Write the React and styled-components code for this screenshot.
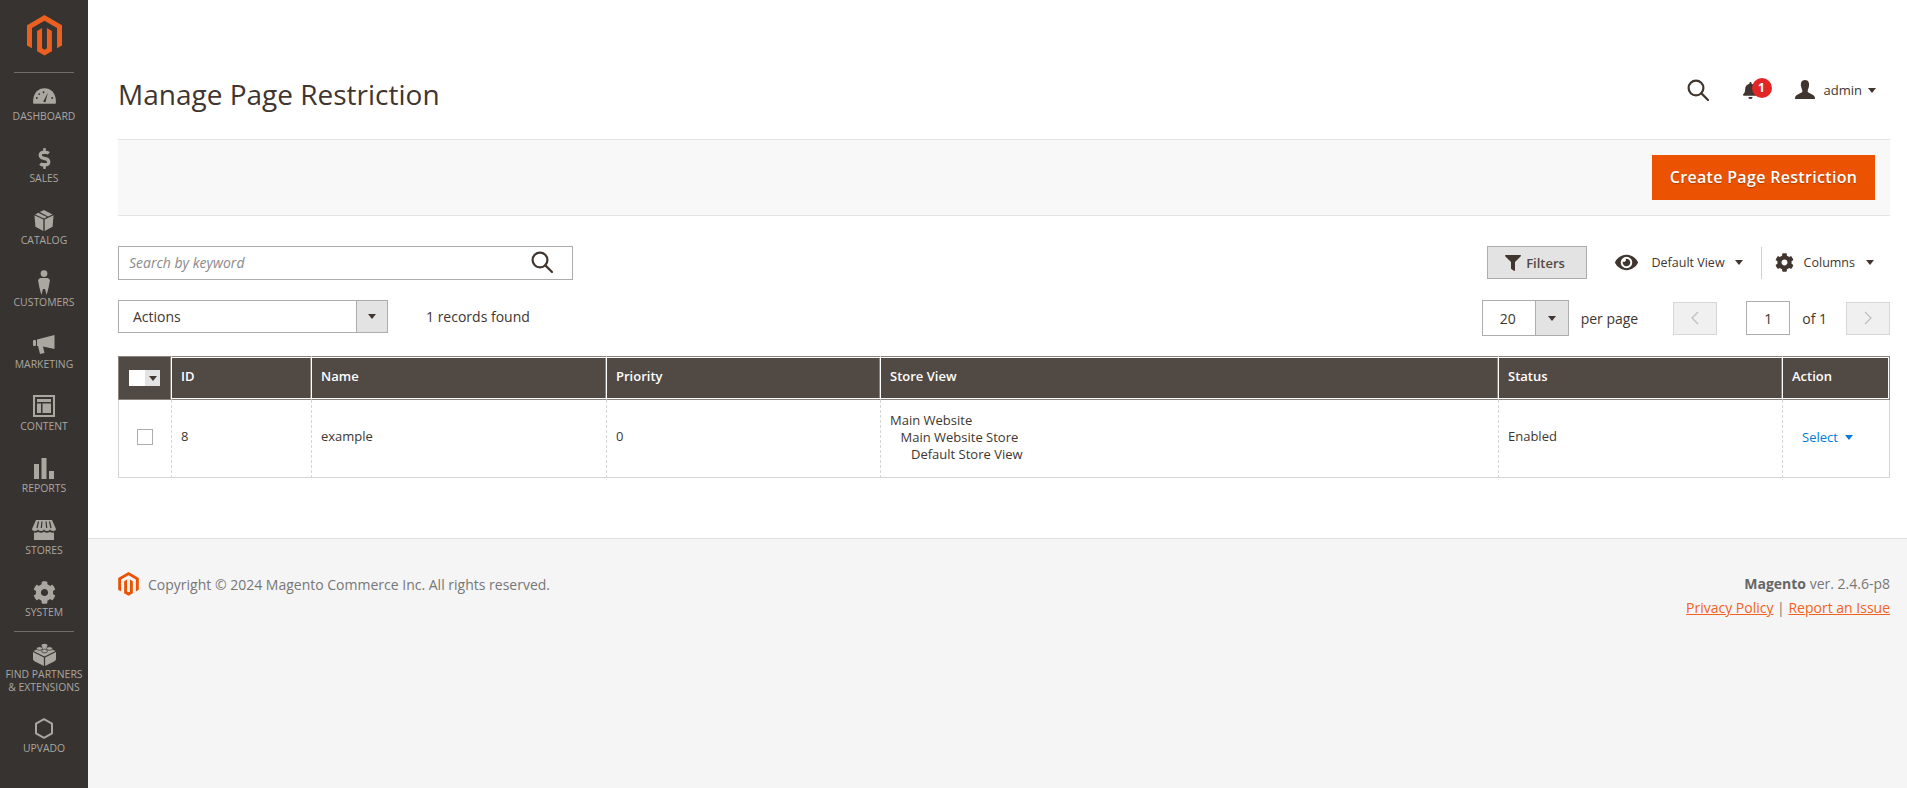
import React from "react";
import styled, { createGlobalStyle } from "styled-components";
import { FaCog, FaEye, FaFilter, FaBell, FaDollarSign } from "react-icons/fa";

const GlobalStyle = createGlobalStyle`
  html, body {
    margin: 0;
    padding: 0;
    background: #fff;
    font-family: "Open Sans", "Liberation Sans", sans-serif;
    color: #41362f;
    font-size: 14px;
  }
  * { box-sizing: border-box; }
`;

const S_Page = styled.div`
  display: flex;
  min-height: 788px;
`;
const S_Sidebar = styled.nav`
  width: 88px;
  flex: none;
  background: #373330;
  display: flex;
  flex-direction: column;
  align-items: center;
`;
const S_LogoBox = styled.div`
  height: 73px;
  padding-top: 15px;
  width: 60px;
  display: flex;
  justify-content: center;
  border-bottom: 1px solid #736d68;
`;
const S_NavItem = styled.div`
  width: 88px;
  height: ${(p) => p.$h || 62}px;
  display: flex;
  flex-direction: column;
  align-items: center;
  color: #aaa6a0;
  font-size: 10.4px;
  line-height: 13px;
  text-transform: uppercase;
  text-align: center;
  white-space: nowrap;
  padding-top: ${(p) => p.$top ?? 11}px;
`;
const S_NavIcon = styled.div`
  height: 24px;
  display: flex;
  align-items: center;
  justify-content: center;
  margin-bottom: 2px;
  color: #aaa6a0;
`;
const S_NavDivider = styled.div`
  width: 60px;
  height: 1px;
  background: #736d68;
`;

const S_Main = styled.main`
  flex: 1;
  min-width: 0;
  display: flex;
  flex-direction: column;
`;
const S_Content = styled.div`
  padding: 0 17px 0 30px;
  height: 538px;
`;
const S_Header = styled.header`
  height: 139px;
  display: flex;
  align-items: flex-start;
  justify-content: space-between;
`;
const S_Title = styled.h1`
  margin: 75px 0 0;
  font-size: 28px;
  line-height: 38px;
  font-weight: 400;
  color: #41362f;
`;
const S_HeaderTools = styled.div`
  margin-top: 78px;
  display: flex;
  align-items: center;
  height: 24px;
  padding-right: 14px;
`;
const S_BellBox = styled.div`
  position: relative;
  margin-left: 33px;
  width: 34px;
  height: 24px;
  display: flex;
  align-items: center;
`;
const S_Badge = styled.span`
  position: absolute;
  left: 10px;
  top: 0;
  width: 20px;
  height: 20px;
  border-radius: 50%;
  background: #e22626;
  color: #fff;
  font-size: 12px;
  font-weight: 700;
  line-height: 20px;
  text-align: center;
`;
const S_AdminUser = styled.div`
  margin-left: 19px;
  display: flex;
  align-items: center;
  font-size: 13px;
  color: #41362f;
`;
const S_Caret = styled.span`
  display: inline-block;
  width: 0;
  height: 0;
  border-left: ${(p) => p.$size || 4}px solid transparent;
  border-right: ${(p) => p.$size || 4}px solid transparent;
  border-top: ${(p) => (p.$size || 4) + 1}px solid ${(p) => p.$color || "#41362f"};
`;
const S_ActionBar = styled.div`
  height: 77px;
  background: #f8f8f8;
  border-top: 1px solid #e3e3e3;
  border-bottom: 1px solid #e3e3e3;
  display: flex;
  justify-content: flex-end;
  align-items: flex-start;
  padding: 15px 15px 0 0;
`;
const S_PrimaryButton = styled.button`
  height: 45px;
  width: 223px;
  border: 0;
  padding: 0 0 2px;
  background: #eb5202;
  color: #fff;
  font-family: inherit;
  font-size: 16px;
  font-weight: 600;
  letter-spacing: 0.02em;
  text-shadow: 0 1px 1px rgba(0, 0, 0, 0.3);
`;
const S_ToolRow = styled.div`
  display: flex;
  align-items: flex-start;
  justify-content: space-between;
  margin-top: ${(p) => p.$mt}px;
  height: ${(p) => p.$h}px;
`;
const S_Group = styled.div`
  display: flex;
  align-items: center;
  padding-right: ${(p) => p.$pr || 0}px;
`;
const S_SearchBox = styled.div`
  width: 455px;
  height: 34px;
  border: 1px solid #adadad;
  display: flex;
  align-items: center;
  justify-content: space-between;
  padding: 0 19px 2px 10px;
  font-style: italic;
  color: #8a8a8a;
  font-size: 14px;
`;
const S_FilterButton = styled.div`
  width: 100px;
  height: 33px;
  background: #e3e3e3;
  border: 1px solid #adadad;
  display: flex;
  align-items: center;
  justify-content: center;
  gap: 5px;
  font-size: 13px;
  font-weight: 600;
  color: #514943;
  padding-right: 3px;
`;
const S_ViewToggle = styled.div`
  display: flex;
  align-items: center;
  font-size: 12.5px;
  color: #41362f;
  margin-left: ${(p) => p.$ml}px;
  height: 33px;
`;
const S_ToggleLabel = styled.span`
  margin: 0 ${(p) => p.$r}px 0 ${(p) => p.$l}px;
`;
const S_VDivider = styled.div`
  width: 1px;
  height: 32px;
  background: #d1d1d1;
  margin: 0 13px 0 18px;
`;
const S_Select = styled.div`
  display: flex;
  width: ${(p) => p.$w}px;
  height: ${(p) => p.$h}px;
  border: 1px solid #adadad;
  font-size: 14px;
  color: #41362f;
`;
const S_SelectValue = styled.div`
  flex: 1;
  display: flex;
  align-items: center;
  padding-left: ${(p) => p.$pl}px;
`;
const S_SelectArrow = styled.div`
  width: ${(p) => p.$w}px;
  background: #e3e3e3;
  border-left: 1px solid #adadad;
  display: flex;
  align-items: center;
  justify-content: center;
`;
const S_Found = styled.div`
  margin-left: 38px;
  font-size: 14px;
  color: #41362f;
`;
const S_PerPage = styled.span`
  margin-left: 12px;
  font-size: 14px;
  color: #41362f;
`;
const S_PageButton = styled.div`
  width: 44px;
  height: 33px;
  background: #f0f0f0;
  border: 1px solid #d6d6d6;
  display: flex;
  align-items: center;
  justify-content: center;
  margin-left: ${(p) => p.$ml || 0}px;
  color: #bdbdbd;
`;
const S_PageInput = styled.div`
  width: 44px;
  height: 34px;
  border: 1px solid #adadad;
  margin-left: 29px;
  display: flex;
  align-items: center;
  justify-content: center;
  font-size: 14px;
`;
const S_Of = styled.span`
  margin: 0 19px 0 12px;
  font-size: 14px;
`;
const S_GridWrap = styled.div`
  margin-top: 20px;
`;
const S_Table = styled.table`
  width: 100%;
  table-layout: fixed;
  border-collapse: separate;
  border-spacing: 0;
`;
const S_Th = styled.th`
  height: 44px;
  background: #514943;
  color: #fff;
  font-size: 13px;
  font-weight: 600;
  text-align: left;
  padding: 0 0 4px 9px;
  border-top: 1px solid #8a837e;
  border-bottom: 1px solid #8a837e;
  border-left: 1px solid #fff;
  box-shadow: inset 0 1px 0 #fff, inset 0 -1px 0 #fff, inset -1px 0 0 #8a837e;
  &:first-child {
    padding: 0;
    border-left: 1px solid #8a837e;
    box-shadow: inset -1px 0 0 #8a837e;
  }
  &:last-child {
    border-right: 1px solid #8a837e;
    box-shadow: inset 0 1px 0 #fff, inset 0 -1px 0 #fff, inset -1px 0 0 #fff;
  }
`;
const S_Td = styled.td`
  height: 78px;
  vertical-align: top;
  padding: ${(p) => (p.$flush ? 0 : "12px 9px 0")};
  font-size: 13px;
  line-height: 17px;
  color: #41362f;
  border-left: 1px dashed #d6d6d6;
  border-bottom: 1px solid #d6d6d6;
  &:first-child {
    border-left: 1px solid #d6d6d6;
  }
  &:last-child {
    border-right: 1px solid #d6d6d6;
  }
`;
const S_TdPlain = styled.div`
  padding-top: 16px;
`;
const S_HeadCheck = styled.div`
  display: flex;
  margin-left: 10px;
  width: 31px;
  height: 16px;
`;
const S_HeadCheckBox = styled.div`
  width: 16px;
  background: #fff;
`;
const S_HeadCheckArrow = styled.div`
  flex: 1;
  background: #e3e3e3;
  display: flex;
  align-items: center;
  justify-content: center;
`;
const S_Checkbox = styled.div`
  width: 16px;
  height: 16px;
  border: 1px solid #adadad;
  margin: 29px 0 0 18px;
`;
const S_Tree = styled.div`
  padding-left: ${(p) => p.$level * 10.5}px;
  white-space: nowrap;
`;
const S_SelectLink = styled.div`
  padding: 29px 0 0 19px;
  color: #007bdb;
  display: flex;
  align-items: center;
  gap: 7px;
`;

const S_Footer = styled.footer`
  flex: 1;
  background: #f5f5f5;
  border-top: 1px solid #e3e3e3;
  padding: 33px 17px 0 30px;
  display: flex;
  justify-content: space-between;
  color: #777;
  font-size: 14px;
`;
const S_Copyright = styled.div`
  display: flex;
  align-items: center;
  gap: 9px;
  height: 24px;
`;
const S_FooterRight = styled.div`
  text-align: right;
  line-height: 24px;
`;
const S_FooterLink = styled.a`
  color: #f26322;
  text-decoration: underline;
`;
const S_Strong = styled.strong`
  color: #666;
  font-weight: 700;
`;

function Logo({ w = 35, h = 41, color = "#eb6020" }) {
  return (
    <svg width={w} height={h} viewBox="0 0 36 42" fill={color}>
      <polygon points="18 0 0 10.4 0 31.2 5.1 34.1 5.1 13.3 18 5.9 30.9 13.3 30.9 34.1 36 31.2 36 10.4" />
      <polygon points="20.5 34.1 18 35.6 15.5 34.1 15.5 13.3 10.4 16.3 10.4 37.1 18 41.5 25.6 37.1 25.6 16.3 20.5 13.3" />
    </svg>
  );
}

function SearchIcon({ size = 22 }) {
  return (
    <svg width={size} height={size} viewBox="0 0 22 22" fill="none" stroke="#41362f" strokeWidth="2.2">
      <circle cx="9" cy="9" r="7.4" />
      <path d="M14.4 14.4 L21 21" strokeLinecap="round" />
    </svg>
  );
}

const navColor = "#aaa6a0";

const navIcons = {
  dashboard: (
    <svg width="23" height="16" viewBox="0 0 24 16" fill={navColor}>
      <path d="M0.3 16 C-1 6 5 0 12 0 C19 0 25 6 23.7 16 Z" />
      <path d="M10.6 14 L15.5 4.5 L13 14.6 Z" fill="#373330" />
      <g fill="#373330">
        <circle cx="4" cy="10" r="1" />
        <circle cx="6.5" cy="6" r="1" />
        <circle cx="11" cy="4" r="1" />
        <circle cx="20" cy="10" r="1" />
      </g>
    </svg>
  ),
  sales: <FaDollarSign size={21} color={navColor} />,
  catalog: (
    <svg width="20" height="21" viewBox="0 0 20 22" fill={navColor}>
      <path d="M0 5.5 L9.3 10 V22 L1 17.5 Z" />
      <path d="M20 5.5 L10.7 10 V22 L19 17.5 Z" />
      <path d="M10 0 L5.5 2.2 L14.2 6.8 L19 4.6 Z" />
      <path d="M4 3 L0.8 4.6 L10 9 L13 7.4 Z" />
    </svg>
  ),
  customers: (
    <svg width="12" height="25" viewBox="0 0 12 25" fill={navColor}>
      <circle cx="6" cy="3.6" r="3.4" />
      <path d="M2 8 H10 L12 10 L10.5 18 L8.6 25 L7 19 H5 L3.4 25 L1.5 18 L0 10 Z" />
    </svg>
  ),
  marketing: (
    <svg width="22" height="19" viewBox="0 0 22 19" fill={navColor}>
      <rect x="0" y="5" width="3" height="6" rx="1" />
      <path d="M4 4.5 L21.5 0 V14 L10 11.5 L11.5 18 L7 19 L5 11 L4 11 Z" />
    </svg>
  ),
  content: (
    <svg width="22" height="22" viewBox="0 0 22 22" fill={navColor}>
      <path d="M0 0 H22 V22 H0 Z M2 2 V20 H20 V2 Z" fillRule="evenodd" />
      <rect x="4" y="4" width="14" height="3" />
      <rect x="4" y="8.5" width="4" height="9.5" />
      <rect x="9.5" y="8.5" width="8.5" height="9.5" />
    </svg>
  ),
  reports: (
    <svg width="20" height="21" viewBox="0 0 20 21" fill={navColor}>
      <rect x="0" y="6" width="5" height="15" />
      <rect x="7.5" y="0" width="5" height="21" />
      <rect x="15" y="13" width="5" height="8" />
    </svg>
  ),
  stores: (
    <svg width="24" height="20" viewBox="0 0 24 20" fill={navColor}>
      <path d="M4 0 H20 L24 9 Q24 11 21.5 11 Q19 11 18 9.5 Q17 11 15 11 Q13 11 12 9.5 Q11 11 9 11 Q7 11 6 9.5 Q5 11 2.5 11 Q0 11 0 9 Z" />
      <path d="M2 12.5 Q4.5 13 6 11.8 Q9 13.5 12 11.8 Q15 13.5 18 11.8 Q19.5 13 22 12.5 V20 H2 Z" />
      <path d="M6.5 1.5 L5 8 M10 1.5 L9.3 8 M14 1.5 L14.7 8 M17.5 1.5 L19 8" stroke="#373330" strokeWidth="1.2" />
    </svg>
  ),
  system: <FaCog size={23} color={navColor} />,
  partners: (
    <svg width="23" height="23" viewBox="0 0 23 23" fill={navColor}>
      <path d="M0 9 L10.9 14.5 V23 L1.5 18.2 Q0 17.5 0 16 Z" />
      <path d="M23 9 L12.1 14.5 V23 L21.5 18.2 Q23 17.5 23 16 Z" />
      <path d="M11.5 3 L22.5 8 L11.5 13.4 L0.5 8 Z" />
      <ellipse cx="11.5" cy="2.5" rx="3" ry="1.8" />
      <ellipse cx="6.5" cy="5.5" rx="3" ry="1.8" stroke="#373330" strokeWidth=".7" />
      <ellipse cx="16.5" cy="5.5" rx="3" ry="1.8" stroke="#373330" strokeWidth=".7" />
      <ellipse cx="11.5" cy="8" rx="3" ry="1.8" stroke="#373330" strokeWidth=".7" />
    </svg>
  ),
  upvado: (
    <svg width="18" height="21" viewBox="0 0 18 21" fill="none" stroke={navColor} strokeWidth="2">
      <path d="M9 1.2 L17 5.6 V15.4 L9 19.8 L1 15.4 V5.6 Z" strokeLinejoin="round" />
    </svg>
  ),
};

const navTop = [
  ["dashboard", "Dashboard"],
  ["sales", "Sales"],
  ["catalog", "Catalog"],
  ["customers", "Customers"],
  ["marketing", "Marketing"],
  ["content", "Content"],
  ["reports", "Reports"],
  ["stores", "Stores"],
  ["system", "System"],
];

function Sidebar() {
  return (
    <S_Sidebar>
      <S_LogoBox>
        <Logo />
      </S_LogoBox>
      {navTop.map(([icon, label]) => (
        <S_NavItem key={label}>
          <S_NavIcon>{navIcons[icon]}</S_NavIcon>
          {label}
        </S_NavItem>
      ))}
      <S_NavDivider />
      <S_NavItem $h={72} $top={10}>
        <S_NavIcon>{navIcons.partners}</S_NavIcon>
        Find Partners
        <br />& Extensions
      </S_NavItem>
      <S_NavItem $top={12}>
        <S_NavIcon>{navIcons.upvado}</S_NavIcon>
        Upvado
      </S_NavItem>
    </S_Sidebar>
  );
}

const columns = [53, 140, 295, 274, 618, 284, 108];

function Grid() {
  return (
    <S_GridWrap>
      <S_Table>
        <colgroup>
          {columns.map((w, i) => (
            <col key={i} width={w} />
          ))}
        </colgroup>
        <thead>
          <tr>
            <S_Th>
              <S_HeadCheck>
                <S_HeadCheckBox />
                <S_HeadCheckArrow>
                  <S_Caret />
                </S_HeadCheckArrow>
              </S_HeadCheck>
            </S_Th>
            <S_Th>ID</S_Th>
            <S_Th>Name</S_Th>
            <S_Th>Priority</S_Th>
            <S_Th>Store View</S_Th>
            <S_Th>Status</S_Th>
            <S_Th>Action</S_Th>
          </tr>
        </thead>
        <tbody>
          <tr>
            <S_Td $flush>
              <S_Checkbox />
            </S_Td>
            <S_Td>
              <S_TdPlain>8</S_TdPlain>
            </S_Td>
            <S_Td>
              <S_TdPlain>example</S_TdPlain>
            </S_Td>
            <S_Td>
              <S_TdPlain>0</S_TdPlain>
            </S_Td>
            <S_Td>
              <S_Tree $level={0}>Main Website</S_Tree>
              <S_Tree $level={1}>Main Website Store</S_Tree>
              <S_Tree $level={2}>Default Store View</S_Tree>
            </S_Td>
            <S_Td>
              <S_TdPlain>Enabled</S_TdPlain>
            </S_Td>
            <S_Td $flush>
              <S_SelectLink>
                Select
                <S_Caret $color="#007bdb" />
              </S_SelectLink>
            </S_Td>
          </tr>
        </tbody>
      </S_Table>
    </S_GridWrap>
  );
}

export default function App() {
  return (
    <>
      <GlobalStyle />
      <S_Page>
        <Sidebar />
        <S_Main>
          <S_Content>
            <S_Header>
              <S_Title>Manage Page Restriction</S_Title>
              <S_HeaderTools>
                <SearchIcon />
                <S_BellBox>
                  <FaBell size={17} color="#41362f" />
                  <S_Badge>1</S_Badge>
                </S_BellBox>
                <S_AdminUser>
                  <svg width="20" height="20" viewBox="0 0 20 20" fill="#41362f">
                    <path d="M10 0 C13.5 0 14.5 3 14 6 C13.6 8.4 12.6 10 12.6 11.4 C12.6 13 20 14 20 18 V19 H0 V18 C0 14 7.4 13 7.4 11.4 C7.4 10 6.4 8.4 6 6 C5.5 3 6.5 0 10 0 Z" />
                  </svg>
                  <S_ToggleLabel $l={9} $r={6}>admin</S_ToggleLabel>
                  <S_Caret />
                </S_AdminUser>
              </S_HeaderTools>
            </S_Header>
            <S_ActionBar>
              <S_PrimaryButton>Create Page Restriction</S_PrimaryButton>
            </S_ActionBar>
            <S_ToolRow $mt={30} $h={34}>
              <S_SearchBox>
                Search by keyword
                <SearchIcon />
              </S_SearchBox>
              <S_Group $pr={16}>
                <S_FilterButton>
                  <FaFilter size={16} color="#41362f" />
                  Filters
                </S_FilterButton>
                <S_ViewToggle $ml={28}>
                  <FaEye size={23} color="#41362f" />
                  <S_ToggleLabel $l={14} $r={10}>Default View</S_ToggleLabel>
                  <S_Caret />
                </S_ViewToggle>
                <S_VDivider />
                <S_ViewToggle $ml={0}>
                  <FaCog size={19} color="#41362f" />
                  <S_ToggleLabel $l={10} $r={11}>Columns</S_ToggleLabel>
                  <S_Caret />
                </S_ViewToggle>
              </S_Group>
            </S_ToolRow>
            <S_ToolRow $mt={20} $h={36}>
              <S_Group>
                <S_Select $w={270} $h={33}>
                  <S_SelectValue $pl={14}>Actions</S_SelectValue>
                  <S_SelectArrow $w={31}>
                    <S_Caret />
                  </S_SelectArrow>
                </S_Select>
                <S_Found>1 records found</S_Found>
              </S_Group>
              <S_Group>
                <S_Select $w={87} $h={36}>
                  <S_SelectValue $pl={17}>20</S_SelectValue>
                  <S_SelectArrow $w={33}>
                    <S_Caret />
                  </S_SelectArrow>
                </S_Select>
                <S_PerPage>per page</S_PerPage>
                <S_PageButton $ml={35}>
                  <svg width="10" height="14" viewBox="0 0 10 14" fill="none" stroke="#bdbdbd" strokeWidth="1.2">
                    <path d="M8 1 L2 7 L8 13" />
                  </svg>
                </S_PageButton>
                <S_PageInput>1</S_PageInput>
                <S_Of>of 1</S_Of>
                <S_PageButton>
                  <svg width="10" height="14" viewBox="0 0 10 14" fill="none" stroke="#bdbdbd" strokeWidth="1.2">
                    <path d="M2 1 L8 7 L2 13" />
                  </svg>
                </S_PageButton>
              </S_Group>
            </S_ToolRow>
            <Grid />
          </S_Content>
          <S_Footer>
            <S_Copyright>
              <Logo w={21} h={24} color="#eb5202" />
              Copyright © 2024 Magento Commerce Inc. All rights reserved.
            </S_Copyright>
            <S_FooterRight>
              <div>
                <S_Strong>Magento</S_Strong> ver. 2.4.6-p8
              </div>
              <div>
                <S_FooterLink>Privacy Policy</S_FooterLink> | <S_FooterLink>Report an Issue</S_FooterLink>
              </div>
            </S_FooterRight>
          </S_Footer>
        </S_Main>
      </S_Page>
    </>
  );
}
